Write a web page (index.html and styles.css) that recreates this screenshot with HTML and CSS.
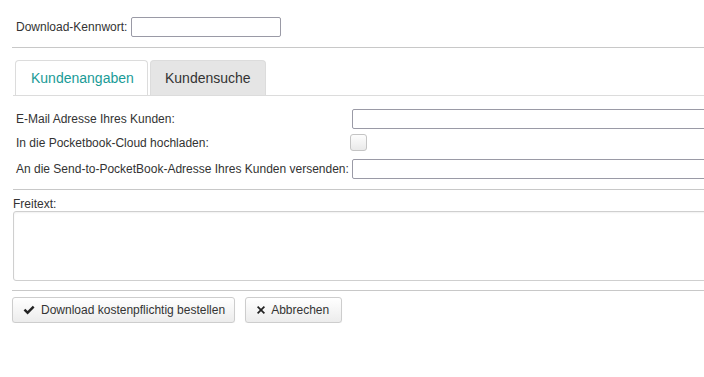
FILE: index.html
```html
<!DOCTYPE html>
<html lang="de">
<head>
  <meta charset="UTF-8">
  <meta name="viewport" content="width=device-width, initial-scale=1.0">
  <title>Download bestellen</title>
  <link rel="stylesheet" href="styles.css">
</head>
<body>
  <div class="page">

    <!-- Kennwort -->
    <div class="pw-row">
      <label for="pw">Download-Kennwort:</label>
      <input type="text" id="pw" class="pw-input">
    </div>

    <hr class="sep sep-top">

    <!-- Reiter -->
    <div class="tabs">
      <div class="tab active">Kundenangaben</div>
      <div class="tab">Kundensuche</div>
    </div>

    <!-- Kundenangaben -->
    <div class="fields">
      <div class="field row-mail">
        <label for="mail">E-Mail Adresse Ihres Kunden:</label>
        <input type="text" id="mail" class="wide-input">
      </div>
      <div class="field row-cloud">
        <label for="cloud">In die Pocketbook-Cloud hochladen:</label>
        <input type="checkbox" id="cloud" class="check">
      </div>
      <div class="field row-send">
        <label for="send">An die Send-to-PocketBook-Adresse Ihres Kunden versenden:</label>
        <input type="text" id="send" class="wide-input">
      </div>
    </div>

    <hr class="sep sep-mid">

    <!-- Freitext -->
    <div class="note">
      <label for="note">Freitext:</label>
      <textarea id="note"></textarea>
    </div>

    <hr class="sep sep-bottom">

    <!-- Aktionen -->
    <div class="actions">
      <button class="btn btn-order">
        <svg class="icon" viewBox="0 0 12 10" width="12" height="10"><path d="M0.6 5.4 L2.3 3.7 L4.6 6 L9.8 0.8 L11.5 2.5 L4.6 9.4 Z" fill="#222"/></svg>
        Download kostenpflichtig bestellen
      </button>
      <button class="btn btn-cancel">
        <svg class="icon" viewBox="0 0 8 8" width="8" height="8"><path d="M1.2 0 L4 2.8 L6.8 0 L8 1.2 L5.2 4 L8 6.8 L6.8 8 L4 5.2 L1.2 8 L0 6.8 L2.8 4 L0 1.2 Z" fill="#222"/></svg>
        Abbrechen
      </button>
    </div>

  </div>
</body>
</html>
```

FILE: styles.css
```css
html,
body {
  margin: 0;
  padding: 0;
  overflow: hidden;
  background-color: #ffffff;
}

body {
  font-family: "Liberation Sans", Arial, sans-serif;
  font-size: 12px;
  color: #333;
}

.page {
  padding-top: 17px;
  overflow: hidden;
}

/* Kennwort */
.pw-row {
  display: flex;
  align-items: center;
  gap: 4px;
  height: 20px;
  padding-left: 16px;
}

input[type="text"] {
  box-sizing: border-box;
  height: 20px;
  margin: 0;
  border: 1px solid #9a9aa6;
  border-radius: 2px;
  font: inherit;
  padding: 1px 3px;
}

.pw-input {
  width: 150px;
}

/* Trennlinien */
.sep {
  border: none;
  border-top: 1px solid #c8c8c8;
  height: 0;
  margin: 0 0 0 12px;
}

.sep-top {
  margin-top: 10px;
}

.sep-mid {
  margin-top: 10px;
  margin-left: 13px;
}

.sep-bottom {
  margin-top: 9px;
}

/* Reiter */
.tabs {
  display: flex;
  gap: 2px;
  margin: 12px 0 0 13px;
  padding-left: 2px;
  border-bottom: 1px solid #dcdcdc;
}

.tab {
  box-sizing: border-box;
  height: 35px;
  line-height: 34px;
  padding: 0 14px;
  font-size: 14px;
  border: 1px solid #dcdcdc;
  border-bottom: none;
  border-radius: 4px 4px 0 0;
  background-color: #e5e5e5;
  color: #333;
}

.tab.active {
  width: 133px;
  padding-left: 15px;
  background-color: #ffffff;
  color: #1a9b97;
}

/* Felder */
.fields {
  padding-left: 16px;
}

.field {
  display: flex;
  align-items: center;
}

.field label {
  width: 336px;
  flex-shrink: 0;
}

.row-mail {
  margin-top: 13px;
  height: 20px;
}

.row-cloud {
  margin-top: 5px;
  height: 17px;
}

.row-send {
  margin-top: 8px;
  height: 20px;
}

.wide-input {
  flex-shrink: 0;
  width: 420px;
}

.check {
  appearance: none;
  -webkit-appearance: none;
  box-sizing: border-box;
  width: 17px;
  height: 17px;
  margin: 0 0 0 -2px;
  border: 1px solid #c4c4c4;
  border-radius: 3px;
  background: linear-gradient(#fdfdfd, #e9e9e9);
}

/* Freitext */
.note {
  padding-left: 13px;
}

.note label {
  display: block;
  margin-top: 7px;
  line-height: 14px;
}

.note textarea {
  display: block;
  box-sizing: border-box;
  width: 760px;
  height: 70px;
  margin: 0;
  border: 1px solid #cfcfcf;
  border-radius: 3px;
  box-shadow: inset 0 1px 2px rgba(0, 0, 0, 0.06);
  resize: none;
}

/* Knöpfe */
.actions {
  display: flex;
  gap: 10px;
  margin-top: 6px;
  padding-left: 12px;
}

.btn {
  display: flex;
  align-items: center;
  gap: 6px;
  box-sizing: border-box;
  height: 26px;
  padding: 0 9px 0 10px;
  white-space: nowrap;
  font-family: inherit;
  font-size: 12px;
  color: #333;
  border: 1px solid #cdcdcd;
  border-radius: 3px;
  background: linear-gradient(#ffffff, #ececec);
  box-shadow: 0 1px 1px rgba(0, 0, 0, 0.05);
}

.btn-cancel {
  padding: 0 12px 0 11px;
}

.icon {
  display: block;
}
```
